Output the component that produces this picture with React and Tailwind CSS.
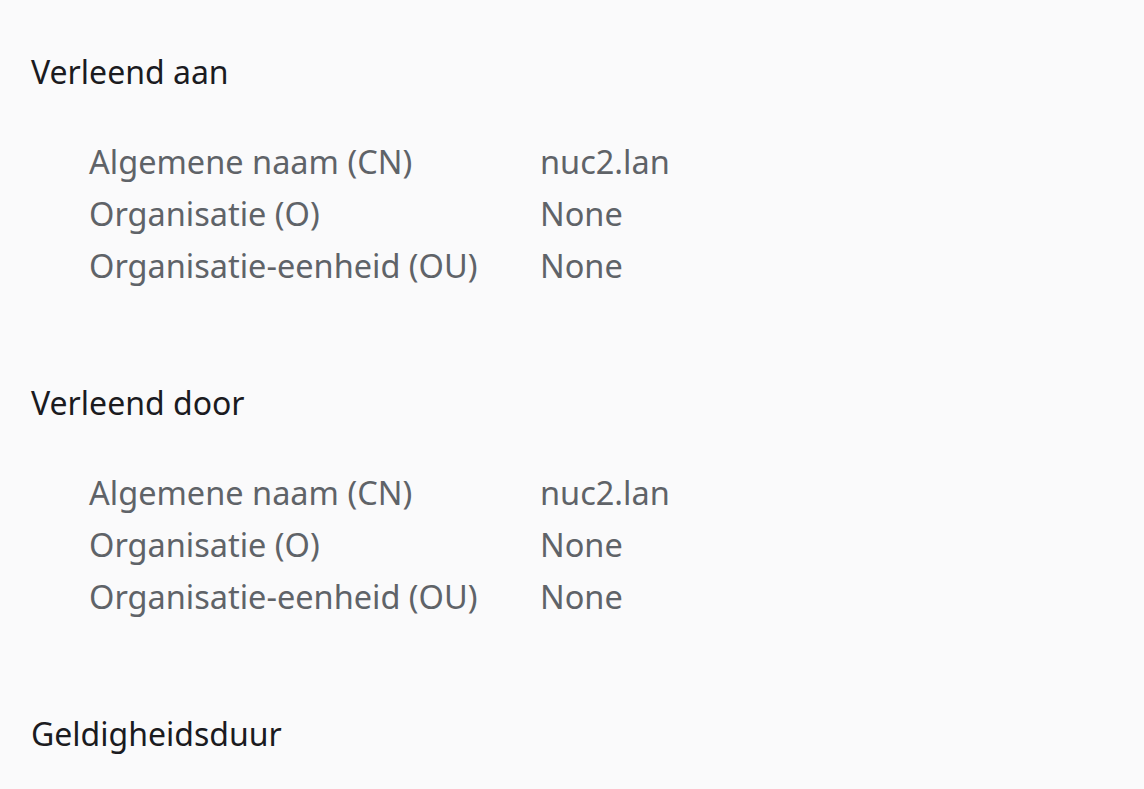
const sections = [
  {
    title: "Verleend aan",
    rows: [
      ["Algemene naam (CN)", "nuc2.lan"],
      ["Organisatie (O)", "None"],
      ["Organisatie-eenheid (OU)", "None"],
    ],
  },
  {
    title: "Verleend door",
    rows: [
      ["Algemene naam (CN)", "nuc2.lan"],
      ["Organisatie (O)", "None"],
      ["Organisatie-eenheid (OU)", "None"],
    ],
  },
  { title: "Geldigheidsduur", rows: [] },
]

export default function App() {
  return (
    <div className="h-[789px] w-[1144px] overflow-hidden bg-[#fafafb] pl-[31px] pt-[50px] font-['Noto_Sans','Open_Sans',sans-serif]">
      <div className="flex flex-col gap-[89px]">
        {sections.map((s) => (
          <section key={s.title}>
            <h2 className="text-[32px] leading-[44px] text-[#1b1b1f]">{s.title}</h2>
            {s.rows.length > 0 && (
              <div className="mt-[42px] grid grid-cols-[451px_1fr] pl-[58px] text-[32.5px] leading-[52px] text-[#5f6368]">
                {s.rows.map(([k, v]) => (
                  <div key={k} className="contents">
                    <div className="whitespace-nowrap">{k}</div>
                    <div>{v}</div>
                  </div>
                ))}
              </div>
            )}
          </section>
        ))}
      </div>
    </div>
  )
}
